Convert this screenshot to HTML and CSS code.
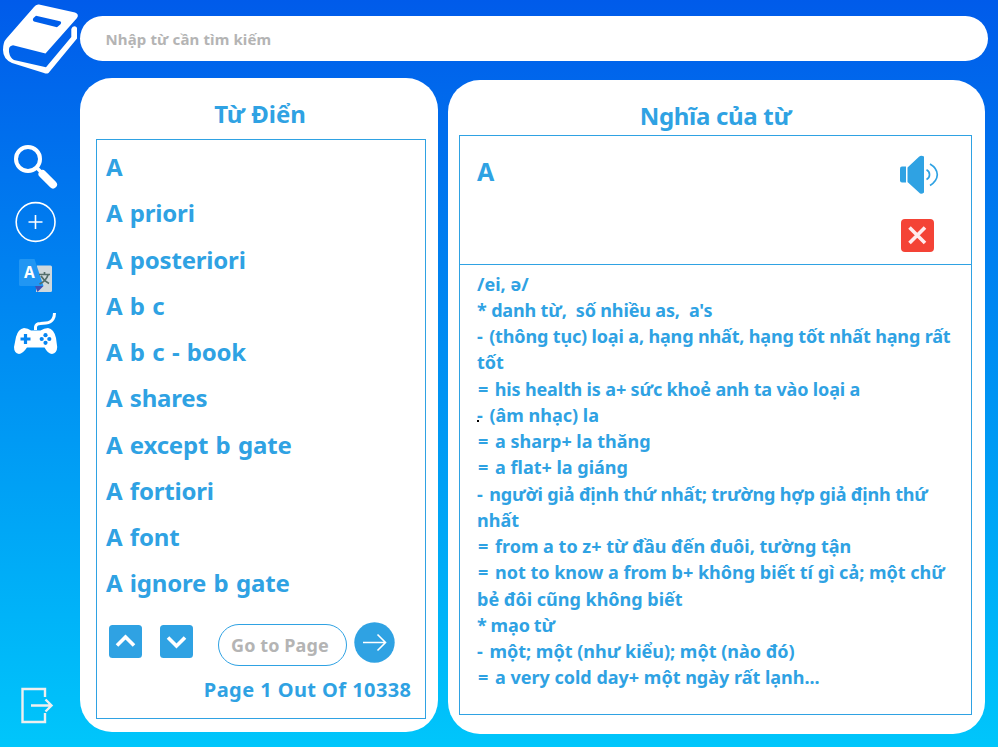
FILE: index.html
```html
<!DOCTYPE html>
<html lang="vi">
<head>
<meta charset="utf-8">
<title>Từ Điển</title>
<link rel="stylesheet" href="styles.css">
</head>
<body>
<div class="app">
  <aside class="sidebar">
    <svg class="logo" viewBox="0 0 80 80" aria-hidden="true"><path fill="#fff" fill-rule="evenodd" d="M39 4.500 75 12.500Q79.500 14 77 18L45.500 53.500 13 45.200Q8 46 9 52Q10 58 14 60L46 67.200 71.300 37V29Q72.500 25.500 75.500 26.500Q77.500 27 77 30V38.500L48.500 73Q46.500 74 44 73L12 63Q3 59 3 50Q3 42 6.500 38.500L34 7Q36 4 39 4.500ZM36 15.700 60 21.200Q62 22 60.500 24.200L57 27.200 34 21.500Q32 20 33.500 18Z"/></svg>
    <nav class="nav">
      <svg class="ic-search" viewBox="0 140 80 54"><circle cx="28" cy="159" r="12" fill="none" stroke="#fff" stroke-width="4"/><path d="M36.500 167.500 41 172" stroke="#fff" stroke-width="3.500"/><path d="M42.500 174 53 184.500" stroke="#fff" stroke-width="8" stroke-linecap="round"/></svg>
      <svg class="ic-add" viewBox="0 194 80 56"><circle cx="35.600" cy="222" r="19.400" fill="none" stroke="#fff" stroke-width="1.600"/><path d="M28.500 222H42.500M35.500 215V229" stroke="#fff" stroke-width="1.600"/></svg>
      <svg class="ic-translate" viewBox="0 250 80 55"><path fill="#cfd8dc" d="M37 265.500H50.500Q52 265.500 52 267V290.500Q52 292 50.500 292H36Z"/><path fill="#3f51b5" d="M35 286H43.500L37.500 292Z"/><path fill="#2196f3" d="M20.500 259H34.500L43.500 286H20.500Q19 286 19 284.500V260.500Q19 259 20.500 259Z"/><path fill="none" stroke="#546e6a" stroke-width="1.700" d="M39 274.500H50M44.500 272V275M48 275Q46 281 39.500 284M41 276Q44 281 49 283.500"/><text x="29.300" y="278.200" class="glyph" text-anchor="middle">A</text></svg>
      <svg class="ic-game" viewBox="0 305 80 60"><path d="M35.500 330V327Q36 323.500 40.500 323.500L46 323Q51 322.500 53 319Q54.500 316.500 54.500 313" fill="none" stroke="#fff" stroke-width="3"/><path fill="#fff" d="M24 328Q28 328 31 330.500H40.500Q44 328 48 328Q54 329 56 338L57.200 347Q57 353 52 354Q48 354 44.500 347.500H27Q22.500 354 19 354Q14 353 14 347L16 337Q18 329 24 328Z"/><path d="M25.500 334V344M20.500 339H30.500" stroke="#0685f2" stroke-width="3.200"/><g fill="#0685f2"><circle cx="45.500" cy="335.200" r="2.100"/><circle cx="45.500" cy="342.800" r="2.100"/><circle cx="41.700" cy="339" r="2.100"/><circle cx="49.300" cy="339" r="2.100"/></g></svg>
    </nav>
    <svg class="ic-exit" viewBox="0 675 80 60"><g fill="none" stroke="#efefef" stroke-width="2.400"><path d="M45 697V689H22.500V722H45V713"/><path d="M31 705.500H51.500M45.500 699.500 51.500 705.500 45.500 711.500"/></g></svg>
  </aside>

  <div class="main">
    <div class="search"><span class="t-search">Nhập từ cần tìm kiếm</span></div>
    <div class="panels">
      <section class="panel words">
        <h1>Từ Điển</h1>
        <div class="box">
          <ul class="list">
            <li>A</li>
            <li>A priori</li>
            <li>A posteriori</li>
            <li>A b c</li>
            <li>A b c - book</li>
            <li>A shares</li>
            <li>A except b gate</li>
            <li>A fortiori</li>
            <li>A font</li>
            <li>A ignore b gate</li>
          </ul>
          <div class="pager">
            <svg class="step" viewBox="0 0 33 33"><rect width="33" height="33" rx="3.500" fill="#2fa2e3"/><path d="M8 20.500 16.500 12 25 20.500" fill="none" stroke="#fff" stroke-width="3.600"/></svg>
            <svg class="step" viewBox="0 0 33 33"><rect width="33" height="33" rx="3.500" fill="#2fa2e3"/><path d="M8 12.500 16.500 21 25 12.500" fill="none" stroke="#fff" stroke-width="3.600"/></svg>
            <div class="goto"><span>Go to Page</span></div>
            <svg class="go" viewBox="0 0 41 41"><circle cx="20.500" cy="20.500" r="20.200" fill="#2fa2e3"/><path d="M9 20.500H31M23.500 12.500 31.500 20.500 23.500 28.500" fill="none" stroke="#fff" stroke-width="1.600"/></svg>
          </div>
          <p class="count">Page 1 Out Of 10338</p>
        </div>
      </section>

      <section class="panel meaning">
        <h1>Nghĩa của từ</h1>
        <div class="box">
          <div class="entry">
            <h2>A</h2>
            <div class="actions">
              <svg class="speaker" viewBox="0 0 40 40"><g fill="#2fa2e3"><path d="M3 11.500H7V27.500H3Q1 27.500 1 25.500V13.500Q1 11.500 3 11.500Z"/><path d="M8.500 12.500 20 1.700Q22 0 25 1.500V37.500Q22 40 20 37.500L8.500 27Z"/></g><path d="M27.500 14.800A5.400 5.400 0 0 1 27.500 24.500M31 9Q38 13 38.300 19.700Q38 26 31 30.500" fill="none" stroke="#2fa2e3" stroke-width="1.700"/></svg>
              <svg class="close" viewBox="0 0 33 33"><rect width="33" height="33" rx="4" fill="#f44336"/><path d="M8.500 8.500 24 24M24 8.500 8.500 24" stroke="#ffebee" stroke-width="3.600"/></svg>
            </div>
          </div>
          <div class="definition">
            <p>/ei, ə/</p>
            <p class="tight">* danh từ,&nbsp; số nhiều as,&nbsp; a's</p>
            <p class="tight"><span class="dash">-</span> (thông tục) loại a, hạng nhất, hạng tốt nhất hạng rất</p>
            <p>tốt</p>
            <p class="tight"><span class="eq">=</span> his health is a+ sức khoẻ anh ta vào loại a</p>
            <p class="marked"><span class="dash">-</span> (âm nhạc) la</p>
            <p><span class="eq">=</span> a sharp+ la thăng</p>
            <p><span class="eq">=</span> a flat+ la giáng</p>
            <p class="tight"><span class="dash">-</span> người giả định thứ nhất; trường hợp giả định thứ</p>
            <p>nhất</p>
            <p><span class="eq">=</span> from a to z+ từ đầu đến đuôi, tường tận</p>
            <p><span class="eq">=</span> not to know a from b+ không biết tí gì cả; một chữ</p>
            <p>bẻ đôi cũng không biết</p>
            <p class="star">* mạo từ</p>
            <p><span class="dash">-</span> một; một (như kiểu); một (nào đó)</p>
            <p><span class="eq">=</span> a very cold day+ một ngày rất lạnh...</p>
          </div>
        </div>
      </section>
    </div>
  </div>
</div>
</body>
</html>
```
FILE: styles.css
```css
* { box-sizing: border-box; margin: 0; padding: 0; }
body { font-family: "Noto Sans", "Open Sans", sans-serif; font-weight: 700; color: #2fa2e3; }
svg { display: block; flex: none; }
.app { width: 998px; height: 747px; display: flex; overflow: hidden; background: linear-gradient(to bottom, #005bea, #00c6fb); }
.sidebar { width: 80px; height: 747px; display: flex; flex-direction: column; padding-bottom: 12px; }
.sidebar svg { width: 80px; }
.logo { height: 80px; }
.nav { margin-top: 60px; }
.ic-search { height: 54px; }
.ic-add { height: 56px; }
.ic-translate { height: 55px; }
.ic-game { height: 60px; }
.ic-exit { height: 60px; margin-top: auto; }
.glyph { font: 700 15.500px "Noto Sans", sans-serif; fill: #fff; }
.main { flex: 1; padding-top: 16px; }
.search { width: 908px; height: 44.500px; border-radius: 23px; background: #fff; padding-left: 25.500px; display: flex; align-items: center; color: #b4b4b4; font-size: 15px; letter-spacing: 0.120px; white-space: nowrap; padding-top: 1px; }
.panels { display: flex; gap: 10px; align-items: flex-start; margin-top: 17.500px; }
.panel { background: #fff; border-radius: 32px; height: 653.500px; }
.words { width: 358px; padding: 18px 12px 0 16px; }
.meaning { width: 537px; margin-top: 2px; padding: 18px 13px 0 11px; }
h1 { font-size: 24px; line-height: 36px; text-align: center; }
.words h1 { padding-right: 2px; }
.meaning h1 { letter-spacing: -0.300px; }
.box { border: 1px solid #2fa2e3; }
.words .box { height: 580px; margin-top: 7px; padding-top: 4px; }
.list { list-style: none; padding-left: 9px; font-size: 24px; line-height: 46.270px; letter-spacing: -0.200px; word-spacing: 1.400px; }
.list li { white-space: nowrap; }
.pager { display: flex; padding-left: 12px; height: 44px; margin-top: 15px; }
.step { width: 33px; height: 33px; margin: 3px 18px 0 0; }
.goto { width: 129px; height: 42px; border: 1.500px solid #2fa2e3; border-radius: 22px; margin: 2px 7px 0 7px; color: #b4b4b4; font-size: 18px; letter-spacing: 0.100px; display: flex; align-items: center; padding-left: 12px; white-space: nowrap; }
.go { width: 41px; height: 41px; }
.count { font-size: 20px; line-height: 30px; margin-top: 9.500px; padding-right: 13.500px; text-align: right; letter-spacing: 0.430px; }
.meaning .box { height: 580px; margin-top: 1px; }
.entry { height: 129px; border-bottom: 1.500px solid #2fa2e3; display: flex; justify-content: space-between; padding: 0 32px 0 17px; }
h2 { font-size: 25px; line-height: 34px; margin-top: 18px; }
.actions { padding-top: 19px; }
.speaker { width: 40px; height: 40px; }
.close { width: 33px; height: 33px; margin: 24px 0 0 2px; }
.definition { padding: 5.500px 0 0 17px; font-size: 18px; line-height: 26.270px; }
.definition p { white-space: nowrap; }
.tight { letter-spacing: -0.150px; }
.dash { margin-right: 2px; }
.eq { margin: 0 2px 0 1px; }
.star { word-spacing: -1px; }
.marked { position: relative; }
.marked::before { content: ""; position: absolute; left: 0; top: 18px; width: 2px; height: 2px; background: #000; }
```
